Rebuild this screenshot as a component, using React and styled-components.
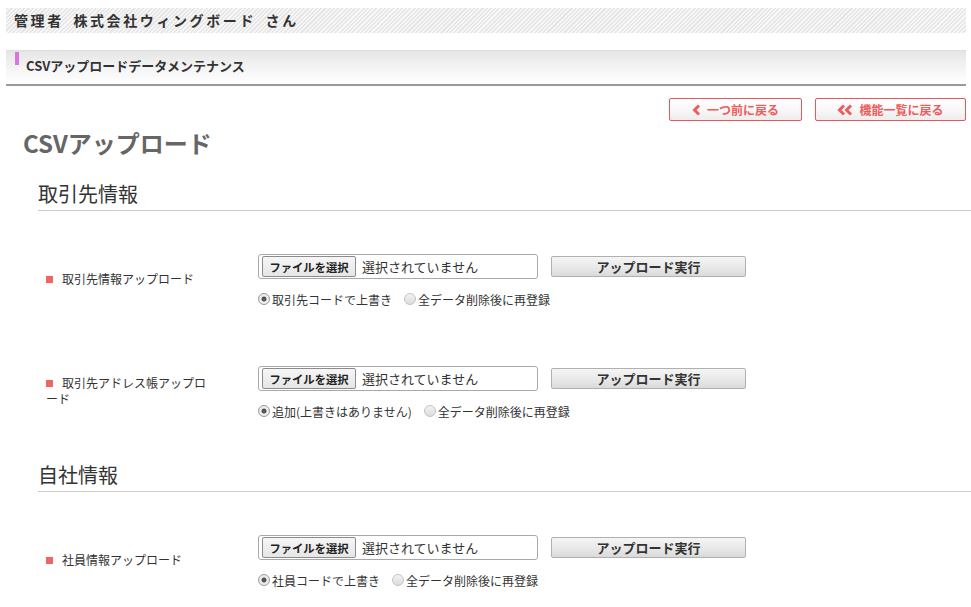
import React from "react";
import styled, { createGlobalStyle } from "styled-components";

const Global = createGlobalStyle`
  html, body { margin: 0; padding: 0; background: #fff; }
  body {
    font-family: "Noto Sans CJK JP", "Noto Sans", sans-serif;
    color: #333;
    overflow: hidden;
  }
`;

const Page = styled.div`
  width: 971px;
  display: flex;
  flex-direction: column;
`;

const TopBar = styled.div`
  margin: 8px 5px 0 6px;
  height: 25px;
  display: flex;
  align-items: center;
  padding-left: 8px;
  background: repeating-linear-gradient(
    -45deg,
    #f7f7f7 0px,
    #f7f7f7 1.5px,
    #e6e6e6 1.5px,
    #e6e6e6 3px
  );
  font-size: 14px;
  font-weight: 700;
  letter-spacing: 2.6px;
  color: #333;
  line-height: 25px;
`;

const PageHeader = styled.div`
  margin: 17px 5px 0 6px;
  height: 33px;
  display: flex;
  padding-left: 9px;
  border-top: 1px solid #dedede;
  border-bottom: 2px solid #9a9a9a;
  background: linear-gradient(to bottom, #e6e6e6 0%, #f6f6f6 60%, #ffffff 100%);
`;

const Accent = styled.span`
  display: block;
  width: 4px;
  height: 13px;
  margin-top: 1px;
  background: #d577e0;
  flex-shrink: 0;
`;

const PageHeaderText = styled.h1`
  margin: 0 0 0 7px;
  align-self: center;
  padding-bottom: 4px;
  font-size: 13px;
  font-weight: 700;
  line-height: 18px;
  color: #333;
`;

const NavRow = styled.div`
  margin-top: 12px;
  display: flex;
  justify-content: flex-end;
  gap: 13px;
  padding-right: 5px;
`;

const NavButton = styled.button`
  width: ${(p) => p.$w}px;
  height: 23px;
  padding: 0;
  display: flex;
  align-items: center;
  justify-content: center;
  gap: 6px;
  border: 1px solid #e8585a;
  border-radius: 2px;
  background: linear-gradient(to bottom, #ffffff 0%, #f8f8f8 50%, #ececec 100%);
  color: #ee5c5c;
  font-family: inherit;
  font-size: 12px;
  font-weight: 700;
  line-height: 1;
  cursor: pointer;
`;

const Title = styled.h2`
  margin: 7px 0 0 23px;
  font-size: 24px;
  line-height: 30px;
  font-weight: 700;
  color: #666;
`;

const Section = styled.section`
  margin-left: 38px;
  margin-top: ${(p) => p.$mt}px;
`;

const SectionHeading = styled.h3`
  margin: 0;
  font-size: 20px;
  font-weight: 400;
  line-height: 28px;
  padding-bottom: 2px;
  border-bottom: 1px solid #cccccc;
  color: #333;
`;

const Rows = styled.div`
  margin-top: 14px;
`;

const Row = styled.div`
  display: grid;
  grid-template-columns: 220px 1fr;
  padding: 29px 0;
`;

const Label = styled.div`
  align-self: center;
  padding: 0 0 4px 8px;
  width: 166px;
  font-size: 12px;
  line-height: 16px;
  color: #333;
`;

const Bullet = styled.span`
  display: inline-block;
  width: 7px;
  height: 7px;
  margin-right: 9px;
  background: #f06464;
  vertical-align: 1px;
`;

const Controls = styled.div`
  display: flex;
  flex-direction: column;
`;

const UploadLine = styled.div`
  display: flex;
  align-items: center;
  gap: 13px;
`;

const FileBox = styled.div`
  width: 280px;
  height: 25px;
  box-sizing: border-box;
  border: 1px solid #a9a9a9;
  border-radius: 3px;
  background: #fff;
  display: flex;
  align-items: center;
  padding: 0 3px;
`;

const FileButton = styled.span`
  width: 94px;
  height: 21px;
  box-sizing: border-box;
  display: flex;
  align-items: center;
  justify-content: center;
  border: 1px solid #8c8c8c;
  border-radius: 2px;
  background: linear-gradient(to bottom, #f6f6f6 0%, #e6e6e6 100%);
  font-size: 11.3px;
  font-weight: 700;
  color: #222;
`;

const FileStatus = styled.span`
  margin-left: 6px;
  font-size: 13px;
  color: #333;
`;

const UploadButton = styled.button`
  width: 195px;
  height: 21px;
  padding: 0;
  border: 1px solid #b0b0b0;
  border-radius: 2px;
  background: linear-gradient(to bottom, #f5f5f5 0%, #e8e8e8 55%, #dadada 100%);
  font-family: inherit;
  font-size: 13px;
  font-weight: 700;
  color: #333;
  line-height: 1;
`;

const RadioLine = styled.div`
  margin-top: 11px;
  height: 18px;
  display: flex;
  align-items: center;
  gap: 12px;
  font-size: 12px;
  color: #333;
`;

const RadioLabel = styled.label`
  display: flex;
  align-items: center;
  gap: 2px;
`;

const RadioDot = styled.span`
  width: 12px;
  height: 12px;
  box-sizing: border-box;
  border-radius: 50%;
  border: 1px solid ${(p) => (p.$on ? "#9a9a9a" : "#c4c4c4")};
  background: ${(p) =>
    p.$on
      ? "radial-gradient(circle, #555 0, #555 2.2px, #e9e9e9 2.8px, #f4f4f4 100%)"
      : "linear-gradient(to bottom, #f2f2f2, #dcdcdc)"};
  flex-shrink: 0;
`;

const Chevron = ({ double }) => (
  <svg width={double ? 16 : 9} height="12" viewBox={double ? "0 0 16 12" : "0 0 9 12"}>
    <polyline
      points="7,1.5 2.5,6 7,10.5"
      fill="none"
      stroke="#ee5c5c"
      strokeWidth="3"
      strokeLinejoin="miter"
    />
    {double && (
      <polyline
        points="14,1.5 9.5,6 14,10.5"
        fill="none"
        stroke="#ee5c5c"
        strokeWidth="3"
        strokeLinejoin="miter"
      />
    )}
  </svg>
);

const UploadRow = ({ label, options }) => (
  <Row>
    <Label>
      <Bullet />
      {label}
    </Label>
    <Controls>
      <UploadLine>
        <FileBox>
          <FileButton>ファイルを選択</FileButton>
          <FileStatus>選択されていません</FileStatus>
        </FileBox>
        <UploadButton>アップロード実行</UploadButton>
      </UploadLine>
      <RadioLine>
        {options.map((o, i) => (
          <RadioLabel key={o}>
            <RadioDot $on={i === 0} />
            {o}
          </RadioLabel>
        ))}
      </RadioLine>
    </Controls>
  </Row>
);

export default function App() {
  return (
    <Page>
      <Global />
      <TopBar>管理者&ensp;株式会社ウィングボード&ensp;さん</TopBar>
      <PageHeader>
        <Accent />
        <PageHeaderText>CSVアップロードデータメンテナンス</PageHeaderText>
      </PageHeader>
      <NavRow>
        <NavButton $w={133}>
          <Chevron />
          一つ前に戻る
        </NavButton>
        <NavButton $w={151}>
          <Chevron double />
          機能一覧に戻る
        </NavButton>
      </NavRow>
      <Title>CSVアップロード</Title>
      <Section $mt={22}>
        <SectionHeading>取引先情報</SectionHeading>
        <Rows>
          <UploadRow
            label="取引先情報アップロード"
            options={["取引先コードで上書き", "全データ削除後に再登録"]}
          />
          <UploadRow
            label="取引先アドレス帳アップロード"
            options={["追加(上書きはありません)", "全データ削除後に再登録"]}
          />
        </Rows>
      </Section>
      <Section $mt={12}>
        <SectionHeading>自社情報</SectionHeading>
        <Rows>
          <UploadRow
            label="社員情報アップロード"
            options={["社員コードで上書き", "全データ削除後に再登録"]}
          />
        </Rows>
      </Section>
    </Page>
  );
}
